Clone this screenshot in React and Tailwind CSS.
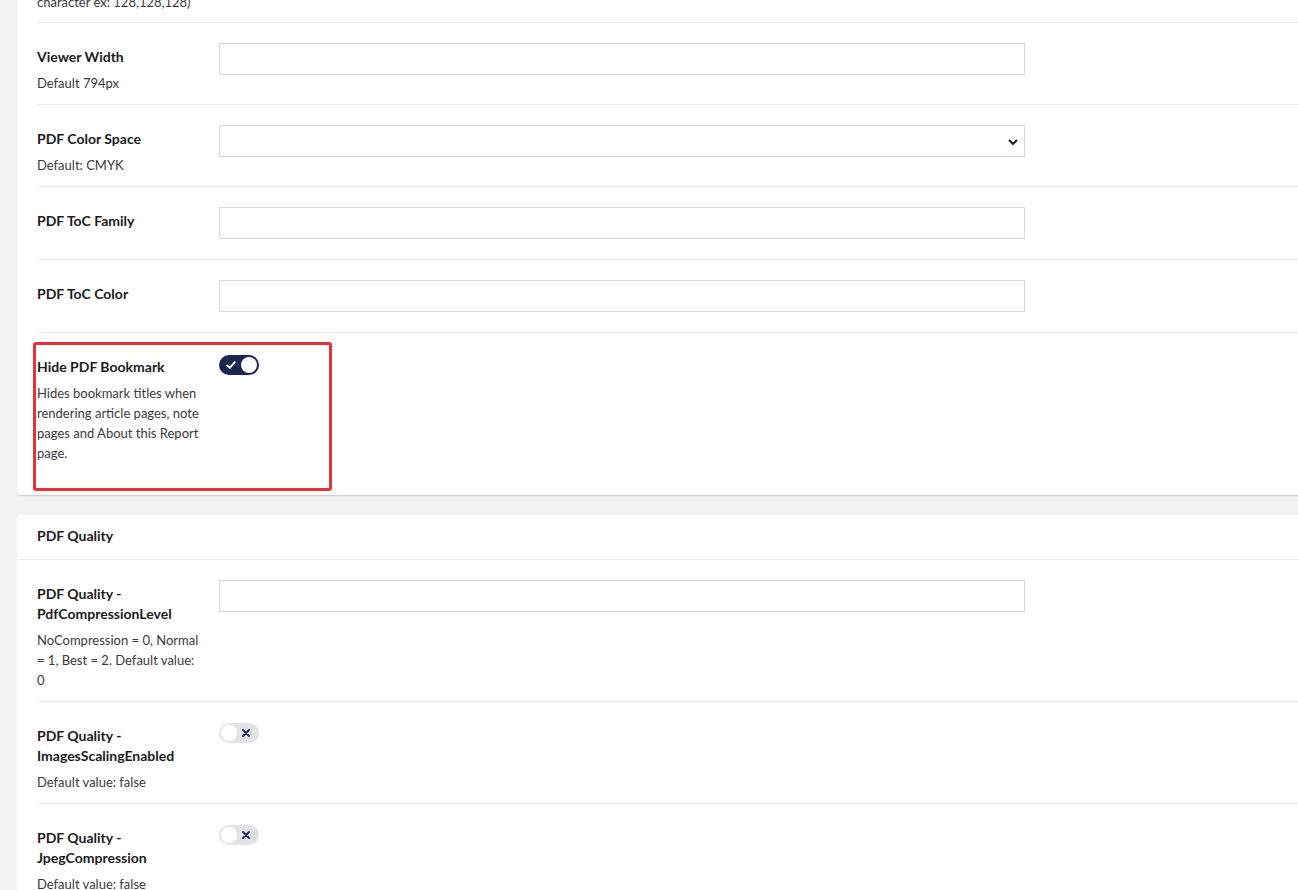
import React from 'react'

function Toggle({ on }) {
  if (on) {
    return (
      <span className="mt-px inline-flex h-5 w-10 items-center rounded-full bg-[#1b264f] px-[2px]">
        <svg width="12" height="12" viewBox="0 0 12 12" className="ml-[4px]">
          <path d="M2.2 6.4 L4.8 8.8 L9.8 3.2" fill="none" stroke="#ffffff" strokeWidth="1.8" strokeLinecap="round" strokeLinejoin="round" />
        </svg>
        <span className="ml-auto h-4 w-4 rounded-full bg-white" />
      </span>
    )
  }
  return (
    <span className="mt-px inline-flex h-5 w-10 items-center rounded-full bg-[#e3e2e6] px-[2px]">
      <span className="h-4 w-4 rounded-full bg-white" />
      <svg width="10" height="10" viewBox="0 0 10 10" className="ml-auto mr-[6px]">
        <path d="M2 2 L8 8 M8 2 L2 8" stroke="#1b264f" strokeWidth="1.8" strokeLinecap="round" />
      </svg>
    </span>
  )
}

function Row({ label, desc, children, last, highlight }) {
  return (
    <div className={`relative mx-5 flex pt-5 pb-[11px] ${last ? '' : 'border-b border-[#edecee]'}`}>
      {highlight && (
        <div className="pointer-events-none absolute left-[-4px] top-[9px] h-[149px] w-[299px] rounded-[3px] border-[3px] border-[#e53238]" />
      )}
      <div className="w-[182px] shrink-0 pr-5 pt-1">
        <div className="text-[14px] font-bold leading-5 text-[#1b1b1d]">{label}</div>
        {desc && <div className="mt-1.5 text-[13px] leading-5 text-[#3a3a3e]">{desc}</div>}
      </div>
      <div className="flex-1 pb-[9px]">{children}</div>
    </div>
  )
}

function TextInput() {
  return <input type="text" className="block h-8 w-[806px] border border-[#d8d7d9] bg-white px-2 text-sm outline-none" />
}

function SelectInput() {
  return (
    <div className="relative h-8 w-[806px] border border-[#d8d7d9] bg-white">
      <svg width="12" height="8" viewBox="0 0 12 8" className="absolute right-[5px] top-[12px]">
        <path d="M2 2 L6 6 L10 2" fill="none" stroke="#222" strokeWidth="2" />
      </svg>
    </div>
  )
}

export default function App() {
  return (
    <div className="h-[890px] w-[1298px] overflow-hidden bg-[#f3f2f1] font-['Lato','Noto_Sans',sans-serif]">
      <div className="ml-[17px] w-[1320px] rounded-b-[3px] bg-white pb-[21px] shadow-[0_1px_1px_rgba(0,0,0,0.16)]">
        <div className="mx-5 border-b border-[#edecee] text-[13px] leading-5 text-[#3a3a3e]">
          <div className="-mt-[8px] pb-[10px]">character ex: 128,128,128)</div>
        </div>
        <Row label="Viewer Width" desc="Default 794px">
          <TextInput />
        </Row>
        <Row label="PDF Color Space" desc="Default: CMYK">
          <SelectInput />
        </Row>
        <Row label="PDF ToC Family">
          <TextInput />
        </Row>
        <Row label="PDF ToC Color">
          <TextInput />
        </Row>
        <Row
          label="Hide PDF Bookmark"
          desc="Hides bookmark titles when rendering article pages, note pages and About this Report page."
          last
          highlight
        >
          <Toggle on />
        </Row>
      </div>

      <div className="ml-[17px] mt-5 w-[1320px] rounded-t-[3px] bg-white">
        <div className="border-b border-[#edecee] px-5 pt-[11px] pb-[13px] text-[14px] font-bold leading-5 text-[#1b1b1d]">
          PDF Quality
        </div>
        <Row label="PDF Quality - PdfCompressionLevel" desc="NoCompression = 0, Normal = 1, Best = 2. Default value: 0">
          <TextInput />
        </Row>
        <Row label="PDF Quality - ImagesScalingEnabled" desc="Default value: false">
          <Toggle />
        </Row>
        <Row label="PDF Quality - JpegCompression" desc="Default value: false">
          <Toggle />
        </Row>
      </div>
    </div>
  )
}
